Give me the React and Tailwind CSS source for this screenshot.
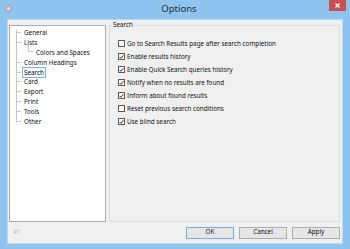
import React, { useState } from 'react';

const font = { fontFamily: '"Segoe UI", "Noto Sans", "Liberation Sans", sans-serif' };

const treeItems = [
  { label: 'General', level: 0 },
  { label: 'Lists', level: 0 },
  { label: 'Colors and Spaces', level: 1 },
  { label: 'Column Headings', level: 0 },
  { label: 'Search', level: 0 },
  { label: 'Card', level: 0 },
  { label: 'Export', level: 0 },
  { label: 'Print', level: 0 },
  { label: 'Tools', level: 0 },
  { label: 'Other', level: 0 },
];

const options = [
  { label: 'Go to Search Results page after search completion', checked: false },
  { label: 'Enable results history', checked: true },
  { label: 'Enable Quick Search queries history', checked: true },
  { label: 'Notify when no results are found', checked: true },
  { label: 'Inform about found results', checked: true },
  { label: 'Reset previous search conditions', checked: false },
  { label: 'Use blind search', checked: true },
];

function CheckBox({ checked }) {
  return (
    <span className="flex items-center justify-center w-[7px] h-[7px] border border-[#5a5a5a] bg-white shrink-0">
      {checked && (
        <svg width="6" height="6" viewBox="0 0 6 6">
          <path d="M0.8 3 L2.3 4.6 L5.3 0.9" stroke="#222" strokeWidth="1.1" fill="none" />
        </svg>
      )}
    </span>
  );
}

export default function App() {
  const [selected, setSelected] = useState('Search');
  const [checks, setChecks] = useState(options.map(o => o.checked));

  return (
    <div className="w-[350px] h-[249px] bg-[#8ec4f0] flex flex-col" style={font}>
      {/* title bar */}
      <div className="relative h-[19px] flex items-center justify-center shrink-0">
        <div className="absolute left-[4px] top-[4px] w-[9px] h-[9px] rounded-full bg-[#a9b4bf] flex items-center justify-center">
          <div className="w-[3px] h-[3px] rounded-full bg-[#e8ecf0]" />
        </div>
        <span className="text-[9.5px] text-[#2b2b2b] pl-[8px]">Options</span>
        <div className="absolute right-[4px] top-0 w-[17px] h-[11px] bg-[#c75050] flex items-center justify-center">
          <svg width="5" height="5" viewBox="0 0 5 5">
            <path d="M0.5 0.5 L4.5 4.5 M4.5 0.5 L0.5 4.5" stroke="#fff" strokeWidth="1.2" />
          </svg>
        </div>
      </div>

      {/* client */}
      <div className="flex-1 mx-[7px] mb-[5px] bg-[#f0f0f0] border border-[#b9d9f5] flex flex-col px-[1px] pt-[5px]">
        <div className="flex h-[197px] gap-[3px]">
          {/* tree */}
          <div className="relative w-[97px] bg-white border border-[#abadb3] pt-[2px] text-[6.3px] text-[#111]">
            <div className="absolute left-[6px] top-[4px] h-[91px] border-l border-[#c8c8c8]" />
            {treeItems.map(item => (
              <div key={item.label} className="flex items-center h-[9.8px]">
                {item.level === 0 ? (
                  <>
                    <span className="w-[5px] ml-[6px] border-t border-[#c8c8c8]" />
                    <span
                      onClick={() => setSelected(item.label)}
                      className={`px-[1px] ml-[1px] leading-[9px] cursor-default ${
                        selected === item.label ? 'border border-[#7eb4ea] bg-[#f2f8fd]' : 'border border-transparent'
                      }`}
                    >
                      {item.label}
                    </span>
                  </>
                ) : (
                  <>
                    <span className="w-[5px] h-[7px] ml-[18px] -mt-[7px] border-l border-b border-[#c8c8c8]" />
                    <span className="px-[1px] ml-[1px] border border-transparent leading-[9px]">{item.label}</span>
                  </>
                )}
              </div>
            ))}
          </div>

          {/* group box */}
          <div className="flex-1 flex flex-col mr-[1px]">
            <div className="flex items-center h-[1px] mt-[0px] text-[6.3px] text-[#111]">
              <span className="w-[3px] border-t border-[#dcdcdc]" />
              <span className="px-[1px] leading-none">Search</span>
              <span className="flex-1 border-t border-[#dcdcdc]" />
            </div>
            <div className="flex-1 border border-[#dcdcdc] border-t-0">
              <div className="flex flex-col pt-[11px] pl-[8px] text-[6.3px] text-[#111]">
                {options.map((o, i) => (
                  <label
                    key={o.label}
                    className="flex items-center gap-[2px] h-[13px] cursor-default"
                    onClick={() => setChecks(c => c.map((v, j) => (j === i ? !v : v)))}
                  >
                    <CheckBox checked={checks[i]} />
                    <span>{o.label}</span>
                  </label>
                ))}
              </div>
            </div>
          </div>
        </div>

        {/* bottom bar */}
        <div className="flex items-center flex-1 pl-[5px] pr-[1px]">
          <span className="text-[5px] text-[#9a9a9a]">F1</span>
          <div className="ml-auto flex gap-[5px] text-[6.3px] text-[#111]">
            <button className="w-[48px] h-[12px] border border-[#6fb0ec] bg-[#e6e6e6] leading-none">OK</button>
            <button className="w-[48px] h-[12px] border border-[#adadad] bg-[#e6e6e6] leading-none">Cancel</button>
            <button className="w-[48px] h-[12px] border border-[#adadad] bg-[#e6e6e6] leading-none">Apply</button>
          </div>
        </div>
      </div>
    </div>
  );
}
